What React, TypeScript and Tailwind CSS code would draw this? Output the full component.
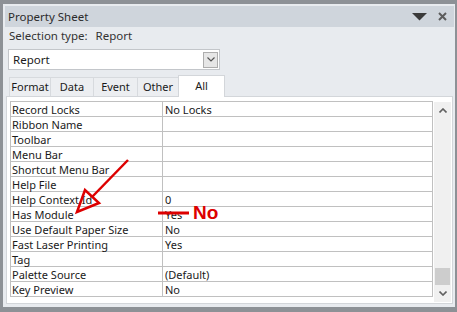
const rows: [string, string][] = [
  ['Record Locks', 'No Locks'],
  ['Ribbon Name', ''],
  ['Toolbar', ''],
  ['Menu Bar', ''],
  ['Shortcut Menu Bar', ''],
  ['Help File', ''],
  ['Help Context Id', '0'],
  ['Has Module', 'Yes'],
  ['Use Default Paper Size', 'No'],
  ['Fast Laser Printing', 'Yes'],
  ['Tag', ''],
  ['Palette Source', '(Default)'],
  ['Key Preview', 'No'],
];

const tabs: { name: string; w: string }[] = [
  { name: 'Format', w: 'w-[42px]' },
  { name: 'Data', w: 'w-[44px] -ml-[1px]' },
  { name: 'Event', w: 'w-[45px] -ml-[1px]' },
  { name: 'Other', w: 'w-[42px] -ml-[1px]' },
];

export default function App() {
  return (
    <div
      className="relative w-[457px] h-[312px] overflow-hidden bg-[#8d9196] pt-[4px] pl-[3px] pr-[2px] pb-[5px] text-[11px] text-[#1a1a1a]"
      style={{ fontFamily: '"Noto Sans", "Open Sans", sans-serif' }}
    >
      <div className="flex flex-col h-full bg-[#e8ebef] pt-[2px]">
        {/* title bar */}
        <div className="flex items-center h-[21px] ml-[2px] mr-[1px] bg-[#cfd5dc] pl-[3px] pr-[7px]">
          <span className="text-[#2b2b2b] text-[11.5px] leading-none">Property Sheet</span>
          <div className="ml-auto flex items-center gap-[11px]">
            <svg width="15" height="8" viewBox="0 0 15 8">
              <polygon points="0,0 15,0 7.5,7.5" fill="#3a3a3a" />
            </svg>
            <svg width="9" height="9" viewBox="0 0 9 9">
              <path d="M1 1 L8 8 M8 1 L1 8" stroke="#5c5c5c" strokeWidth="2" />
            </svg>
          </div>
        </div>

        {/* selection type */}
        <div className="flex items-center h-[16px] mt-[1px] pl-[6px] gap-[8px] text-[#333] text-[11.5px]">
          <span>Selection type:</span>
          <span>Report</span>
        </div>

        {/* combo */}
        <div className="flex items-center ml-[5px] mt-[5px] w-[212px] h-[21px] bg-white border border-[#c3c6ca] pl-[4px] pr-[1px] text-[11.5px]">
          <span>Report</span>
          <div className="ml-auto flex items-center justify-center w-[15px] h-[16px] bg-[#e6e6e6] border border-[#adadad]">
            <svg width="8" height="5" viewBox="0 0 8 5">
              <path d="M0.5 0.5 L4 4 L7.5 0.5" stroke="#555" strokeWidth="1.2" fill="none" />
            </svg>
          </div>
        </div>

        {/* tabs */}
        <div className="flex items-end h-[21px] mt-[5px] pl-[6px]">
          {tabs.map((t) => (
            <div
              key={t.name}
              className={`flex items-center justify-center h-[19px] ${t.w} bg-[#eceef1] border border-b-0 border-[#d7dade]`}
            >
              {t.name}
            </div>
          ))}
          <div className="flex items-start justify-center pt-[2px] h-[22px] w-[47px] -ml-[1px] bg-white border border-b-0 border-[#d3d6da] -mb-[1px] relative z-10">
            All
          </div>
        </div>

        {/* grid panel */}
        <div className="flex ml-[3px] mr-[2px] h-[208px] bg-white border border-[#d3d6da] pt-[4px] pl-[3px] pr-[1px]">
          <div className="w-[423px] self-start border-t border-l border-r border-[#c0c0c0]">
            {rows.map(([k, v]) => (
              <div key={k} className="flex h-[15px] border-b border-[#c0c0c0] leading-[14px]">
                <div className="w-[152px] pl-[1px] pt-[1px] border-r border-[#c0c0c0] whitespace-nowrap">{k}</div>
                <div className="pl-[2px] pt-[1px] whitespace-nowrap">{v}</div>
              </div>
            ))}
          </div>
          <div className="flex flex-col items-center w-[17px] h-[200px] mt-[1px] ml-[1px] bg-[#f0f0f0]">
            <div className="h-[17px] flex items-center justify-center">
              <svg width="8" height="5" viewBox="0 0 8 5">
                <path d="M0.5 4.5 L4 1 L7.5 4.5" stroke="#606060" strokeWidth="1.6" fill="none" />
              </svg>
            </div>
            <div className="flex-1 w-full flex flex-col justify-end px-[1px]">
              <div className="h-[17px] w-full bg-[#cdcdcd]" />
            </div>
            <div className="h-[17px] flex items-center justify-center">
              <svg width="8" height="5" viewBox="0 0 8 5">
                <path d="M0.5 0.5 L4 4 L7.5 0.5" stroke="#606060" strokeWidth="1.6" fill="none" />
              </svg>
            </div>
          </div>
        </div>
      </div>

      {/* red annotations */}
      <svg className="absolute left-0 top-0 pointer-events-none" width="457" height="312" viewBox="0 0 457 312">
        <line x1="128" y1="160" x2="92" y2="197" stroke="#dd0000" strokeWidth="2.5" />
        <polygon points="77,212 85,190 99,203" fill="none" stroke="#dd0000" strokeWidth="2.5" strokeLinejoin="miter" />
        <line x1="158" y1="213" x2="189" y2="213" stroke="#dd0000" strokeWidth="3" />
      </svg>
      <span
        className="absolute left-[193px] top-[201px] text-[19px] font-bold leading-[24px] text-[#dd0000]"
        style={{ fontFamily: '"Liberation Sans", Arial, sans-serif' }}
      >
        No
      </span>
    </div>
  );
}
